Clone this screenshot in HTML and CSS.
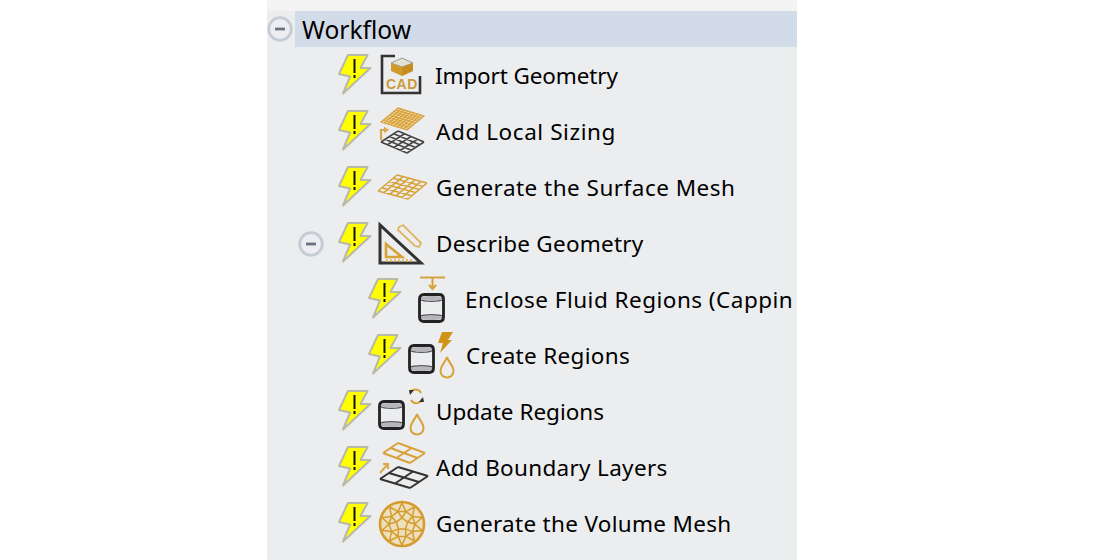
FILE: index.html
```html
<!DOCTYPE html>
<html lang="en">
<head>
<meta charset="utf-8">
<title>Workflow</title>
<link rel="stylesheet" href="styles.css">
</head>
<body>
<svg class="defs" aria-hidden="true">
  <defs>
    <g id="bolt">
      <path d="M10 2H29.500L22.500 15H32.500L5 40.500L12 23.500L1 21Z" fill="#ffff00" stroke="#b9b9a8" stroke-width="2" stroke-linejoin="round"/>
      <path d="M16.500 6V20" stroke="#111" stroke-width="2"/>
      <path d="M16.500 22V25" stroke="#111" stroke-width="2"/>
    </g>
    <g id="toggle">
      <circle cx="13" cy="13" r="11.300" fill="#eceef1" stroke="#c6ccd4" stroke-width="2.800"/>
      <path d="M8 13H18" stroke="#69717f" stroke-width="2.800"/>
    </g>
    <path id="g8" vector-effect="non-scaling-stroke" fill="#ecd9ae" d="M0 0H8M0 1H8M0 2H8M0 3H8M0 4H8M0 5H8M0 6H8M0 7H8M0 8H8V0H0V8M1 0V8M2 0V8M3 0V8M4 0V8M5 0V8M6 0V8M7 0V8"/>
    <path id="g5" vector-effect="non-scaling-stroke" fill="none" d="M0 0H5M0 1H5M0 2H5M0 3H5M0 4H5M0 5H5M0 0V5M1 0V5M2 0V5M3 0V5M4 0V5M5 0V5"/>
    <path id="g4" vector-effect="non-scaling-stroke" fill="none" d="M0 0H4M0 1H4M0 2H4M0 3H4M0 4H4M0 0V4M1 0V4M2 0V4M3 0V4M4 0V4"/>
    <path id="g2" vector-effect="non-scaling-stroke" fill="none" d="M0 0H2M0 1H2M0 2H2M0 0V2M1 0V2M2 0V2"/>
    <g id="cyl">
      <path d="M3 4C7 2.500 20 2.500 24 4V6C20 8 7 8 3 6Z" fill="#b4b6b9"/>
      <path d="M3 24C7 22 20 22 24 24V26C20 27.500 7 27.500 3 26Z" fill="#b4b6b9"/>
      <path d="M2 6.500C6 9 21 9 25 6.500M2 23.500C6 21 21 21 25 23.500" fill="none" stroke="#555" stroke-width="1.300"/>
      <path d="M1.500 6Q1.500 1.500 6 1.500H21Q25.500 1.500 25.500 6V24Q25.500 28.500 21 28.500H6Q1.500 28.500 1.500 24Z" fill="none" stroke="#222" stroke-width="2.800"/>
    </g>
    <path id="drop" d="M8 1C7 5 1.500 10 1.500 15C1.500 19 4.500 21.500 8 21.500C11.500 21.500 14.500 19 14.500 15C14.500 10 9 5 8 1Z" fill="none" stroke="#d9a238" stroke-width="2"/>
  </defs>
</svg>
<main class="panel">
  <div class="root">
    <svg class="tg root-tg" viewBox="0 0 26 26"><use href="#toggle"/></svg>
    <div class="root-label">Workflow</div>
  </div>

  <div class="row">
    <svg class="bolt" viewBox="0 0 34 42"><use href="#bolt"/></svg>
    <svg class="icon" viewBox="0 0 56 56">
      <path d="M17 8H4V45H42V28" fill="none" stroke="#333" stroke-width="2.600"/>
      <path d="M24 10L35 15L24 19L13 15Z" fill="#e4e0d4" stroke="#999" stroke-width="1"/>
      <path d="M13 15L24 19V28L13 23Z" fill="#d29a2a"/>
      <path d="M24 19L35 15V23L24 28Z" fill="#c58c1e"/>
      <text class="cad" x="8" y="41">CAD</text>
    </svg>
    <div class="label sp-import">Import Geometry</div>
  </div>

  <div class="row">
    <svg class="bolt" viewBox="0 0 34 42"><use href="#bolt"/></svg>
    <svg class="icon" viewBox="0 0 56 56">
      <use href="#g8" stroke="#d9a238" stroke-width="1.200" transform="matrix(2.125 -1.750 3.250 1 3 18)"/>
      <use href="#g4" stroke="#444" stroke-width="1.500" transform="matrix(4.250 -2.750 6.500 2.750 3 38)"/>
      <path d="M3 36V26H7" fill="none" stroke="#dba94c" stroke-width="2.200"/>
      <path d="M6 22.500L11 26L6 29Z" fill="#dba94c"/>
    </svg>
    <div class="label sp-6">Add Local Sizing</div>
  </div>

  <div class="row">
    <svg class="bolt" viewBox="0 0 34 42"><use href="#bolt"/></svg>
    <svg class="icon" viewBox="0 0 56 56">
      <use href="#g5" stroke="#d9a238" stroke-width="1.600" transform="matrix(3.800 -3.200 6 1.600 0 31)"/>
    </svg>
    <div class="label sp-5">Generate the Surface Mesh</div>
  </div>

  <div class="row with-toggle">
    <svg class="tg" viewBox="0 0 26 26"><use href="#toggle"/></svg>
    <svg class="bolt" viewBox="0 0 34 42"><use href="#bolt"/></svg>
    <svg class="icon" viewBox="0 0 56 56">
      <path d="M2 9V47H43Z" fill="none" stroke="#333" stroke-width="3"/>
      <path d="M8 28V41H24Z" fill="none" stroke="#d9a238" stroke-width="2.600"/>
      <path d="M8 44.500H36" fill="none" stroke="#dfb560" stroke-width="2.400" stroke-dasharray="2 2"/>
      <path d="M21 11L25 9L43 27L41 31L37 30L20 14Z" fill="none" stroke="#dfb560" stroke-width="1.800"/>
    </svg>
    <div class="label sp-2">Describe Geometry</div>
  </div>

  <div class="row child">
    <svg class="bolt" viewBox="0 0 34 42"><use href="#bolt"/></svg>
    <svg class="icon" viewBox="0 0 56 56">
      <path d="M12 5.500H37" stroke="#d9a238" stroke-width="2"/>
      <path d="M24.500 6V16M21 13L24.500 17L28 13" fill="none" stroke="#d9a238" stroke-width="2"/>
      <use href="#cyl" x="10" y="21"/>
    </svg>
    <div class="label sp-5 child-label">Enclose Fluid Regions (Capping)</div>
  </div>

  <div class="row child">
    <svg class="bolt" viewBox="0 0 34 42"><use href="#bolt"/></svg>
    <svg class="icon" viewBox="0 0 56 56">
      <use href="#cyl" x="0" y="16"/>
      <path d="M34 4H45L40 12H44L32 25L35 15H30Z" fill="#d29418"/>
      <use href="#drop" x="31" y="28"/>
    </svg>
    <div class="label sp-3">Create Regions</div>
  </div>

  <div class="row">
    <svg class="bolt" viewBox="0 0 34 42"><use href="#bolt"/></svg>
    <svg class="icon" viewBox="0 0 56 56">
      <use href="#cyl" x="0" y="16"/>
      <path d="M32 9A6 6 0 0 1 43 9" fill="none" stroke="#d9a238" stroke-width="2"/>
      <path d="M44 15A6 6 0 0 1 33 16" fill="none" stroke="#d9a238" stroke-width="2"/>
      <path d="M31 6L36 6L32 11Z" fill="#333"/>
      <path d="M46 18L41 18L45 13Z" fill="#333"/>
      <use href="#drop" x="31" y="29"/>
    </svg>
    <div class="label">Update Regions</div>
  </div>

  <div class="row">
    <svg class="bolt" viewBox="0 0 34 42"><use href="#bolt"/></svg>
    <svg class="icon" viewBox="0 0 56 56">
      <use href="#g2" stroke="#d9a238" stroke-width="2" transform="matrix(7.500 -5 13.500 5 5 13)"/>
      <use href="#g2" stroke="#333" stroke-width="2" transform="matrix(9 -6 15 4.500 2 39)"/>
      <path d="M2 33L9 25M5 24H10V29" fill="none" stroke="#dba94c" stroke-width="2"/>
    </svg>
    <div class="label sp-3">Add Boundary Layers</div>
  </div>

  <div class="row">
    <svg class="bolt" viewBox="0 0 34 42"><use href="#bolt"/></svg>
    <svg class="icon" viewBox="0 0 56 56">
      <circle cx="24" cy="28" r="22" fill="#eedfbc" stroke="#d49c2c" stroke-width="2.600"/>
      <path d="M28 15.600L34.500 20.400L37 28L34.500 35.600L28 40.400L20 40.400L13.500 35.600L11 28L13.500 20.400L20 15.600ZM24 7L28 15.600M24 7L20 15.600M36.300 11L28 15.600M36.300 11L34.500 20.400M44 21.500L34.500 20.400M44 21.500L37 28M44 34.500L37 28M44 34.500L34.500 35.600M36.300 45L34.500 35.600M36.300 45L28 40.400M24 49L28 40.400M24 49L20 40.400M11.700 45L20 40.400M11.700 45L13.500 35.600M4 34.500L13.500 35.600M4 34.500L11 28M4 21.500L11 28M4 21.500L13.500 20.400M11.700 11L13.500 20.400M11.700 11L20 15.600M24 22L29.700 26.100L27.500 32.900L20.500 32.900L18.300 26.100ZM24 22L20 15.600M24 22L28 15.600M29.700 26.100L34.500 20.400M29.700 26.100L37 28M27.500 32.900L34.500 35.600M27.500 32.900L28 40.400M20.500 32.900L20 40.400M20.500 32.900L13.500 35.600M18.300 26.100L11 28M18.300 26.100L13.500 20.400" fill="none" stroke="#d49c2c" stroke-width="1.500"/>
    </svg>
    <div class="label sp-3">Generate the Volume Mesh</div>
  </div>
</main>
</body>
</html>
```
FILE: styles.css
```css
* { box-sizing: border-box; }
html, body { margin: 0; height: 100%; background: #fff; overflow: hidden; }
body { font-family: "Noto Sans", "Liberation Sans", sans-serif; color: #000; }
.defs { position: absolute; width: 0; height: 0; }
.panel {
  margin-left: 267px;
  width: 530px;
  height: 560px;
  padding-top: 11px;
  background: linear-gradient(#f3f3f3 0, #f3f3f3 11px, #ecedef 11px);
}
.root { display: flex; align-items: center; height: 36px; margin-bottom: 1px; }
.root-tg { margin-right: 2px; }
.root-label {
  flex: 1;
  height: 36px;
  padding-left: 7px;
  background: #d2dce8;
  font-size: 24.600px;
  line-height: 38px;
}
.tg { width: 26px; height: 26px; flex: none; overflow: visible; }
.row {
  display: flex;
  align-items: center;
  height: 56px;
  padding-left: 71px;
  padding-right: 4px;
  white-space: nowrap;
}
.row.child { padding-left: 101px; }
.row.with-toggle { padding-left: 31px; }
.row.with-toggle .tg { margin-right: 14px; }
.bolt { width: 34px; height: 42px; flex: none; margin-top: -4px; margin-right: 6px; overflow: visible; }
.icon { width: 56px; height: 56px; flex: none; overflow: visible; }
.label { font-size: 22.500px; overflow: hidden; flex: 1; line-height: 56px; padding-left: 2px; }
.child-label { padding-left: 1px; }
.sp-import { letter-spacing: -0.130px; padding-left: 1px; }
.sp-2 { letter-spacing: 0.240px; }
.sp-3 { letter-spacing: 0.310px; }
.sp-5 { letter-spacing: 0.480px; }
.sp-6 { letter-spacing: 0.580px; }
.cad { font: bold 14px "Liberation Sans", sans-serif; fill: #c99a3c; letter-spacing: 0.500px; }
```
